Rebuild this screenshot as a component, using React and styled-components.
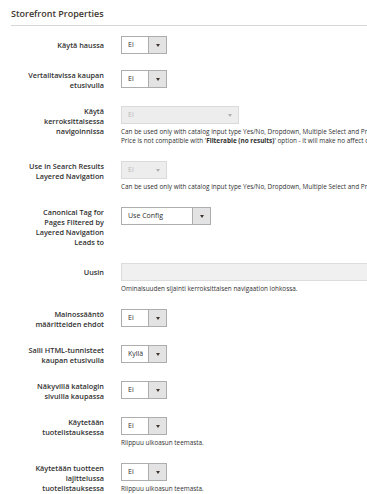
import React from 'react'
import styled, {createGlobalStyle} from 'styled-components'

const GlobalStyle = createGlobalStyle`
  body {
    margin: 0;
    background: #ffffff;
    font-family: "Open Sans", "Liberation Sans", sans-serif;
    overflow: hidden;
  }
`

const fields = [
  {label: 'Käytä haussa', value: 'Ei'},
  {label: 'Vertailtavissa kaupan etusivulla', value: 'Ei'},
  {
    label: 'Käytä kerroksittaisessa navigoinnissa',
    value: 'Ei',
    disabled: true,
    width: 118,
    note: [
      'Can be used only with catalog input type Yes/No, Dropdown, Multiple Select and Price.',
      <>Price is not compatible with '<b>Filterable (no results)</b>' option - it will make no affect on Price filter.</>,
    ],
  },
  {
    label: 'Use in Search Results Layered Navigation',
    value: 'Ei',
    disabled: true,
    note: ['Can be used only with catalog input type Yes/No, Dropdown, Multiple Select and Price.'],
  },
  {label: 'Canonical Tag for Pages Filtered by Layered Navigation Leads to', value: 'Use Config', width: 90},
  {label: 'Uusin', input: true, note: ['Ominaisuuden sijainti kerroksittaisen navigaation lohkossa.']},
  {label: 'Mainossääntö määritteiden ehdot', value: 'Ei'},
  {label: 'Salli HTML-tunnisteet kaupan etusivulla', value: 'Kyllä'},
  {label: 'Näkyvillä katalogin sivuilla kaupassa', value: 'Ei'},
  {label: 'Käytetään tuotelistauksessa', value: 'Ei', note: ['Riippuu ulkoasun teemasta.']},
  {label: 'Käytetään tuotteen lajittelussa tuotelistauksessa', value: 'Ei', note: ['Riippuu ulkoasun teemasta.']},
]

const App = () => {
  return (
    <>
      <GlobalStyle />
      <Page>
        <Title>Storefront Properties</Title>
        <Fieldset>
          {fields.map((f) => (
            <Field key={f.label}>
              <Label>{f.label}</Label>
              <Control>
                {f.input ? (
                  <TextInput />
                ) : (
                  <Select $width={f.width || 46} $disabled={f.disabled}>
                    <Value>{f.value}</Value>
                    <ArrowBox $disabled={f.disabled}>
                      <Caret $disabled={f.disabled} />
                    </ArrowBox>
                  </Select>
                )}
                {f.note && (
                  <Note>
                    {f.note.map((line, i) => (
                      <div key={i}>{line}</div>
                    ))}
                  </Note>
                )}
              </Control>
            </Field>
          ))}
        </Fieldset>
      </Page>
    </>
  )
}

export default App

const Page = styled.div`
  width: 640px;
  padding: 8px 0 0 11px;
`

const Title = styled.div`
  font-size: 9px;
  font-weight: 600;
  line-height: 12px;
  color: #41362f;
  padding-bottom: 5px;
  border-bottom: 1px solid #d6d6d6;
`

const Fieldset = styled.div`
  display: flex;
  flex-direction: column;
  gap: 16px;
  padding-top: 10px;
`

const Field = styled.div`
  display: grid;
  grid-template-columns: 93px 1fr;
  column-gap: 17px;
  align-items: start;
`

const Label = styled.div`
  padding-left: 13px;
  min-height: 18px;
  display: flex;
  align-items: center;
  justify-content: flex-end;
  text-align: right;
  font-size: 7.3px;
  font-weight: 600;
  line-height: 10px;
  color: #303030;
`

const Control = styled.div`
  display: flex;
  flex-direction: column;
  align-items: flex-start;
`

const Select = styled.div`
  width: ${({$width}) => $width}px;
  height: 18px;
  box-sizing: border-box;
  display: flex;
  border: 1px solid ${({$disabled}) => ($disabled ? '#dadada' : '#adadad')};
  background: ${({$disabled}) => ($disabled ? '#ededed' : '#ffffff')};
  color: ${({$disabled}) => ($disabled ? '#b8b8b8' : '#303030')};
`

const Value = styled.span`
  flex: 1;
  padding-left: 6px;
  font-size: 7px;
  line-height: 16px;
`

const ArrowBox = styled.span`
  width: 17px;
  display: flex;
  align-items: center;
  justify-content: center;
  background: ${({$disabled}) => ($disabled ? 'transparent' : '#e3e3e3')};
  border-left: 1px solid ${({$disabled}) => ($disabled ? 'transparent' : '#adadad')};
`

const Caret = styled.span`
  width: 0;
  height: 0;
  border-left: 2.5px solid transparent;
  border-right: 2.5px solid transparent;
  border-top: 3px solid ${({$disabled}) => ($disabled ? '#b0b0b0' : '#41362f')};
`

const TextInput = styled.div`
  width: 420px;
  height: 18px;
  box-sizing: border-box;
  background: #f0f0f0;
  border: 1px solid #dcdcdc;
`

const Note = styled.div`
  margin-top: 3px;
  font-size: 6.4px;
  line-height: 9px;
  color: #303030;
  white-space: nowrap;

  b {
    font-weight: 700;
  }
`
